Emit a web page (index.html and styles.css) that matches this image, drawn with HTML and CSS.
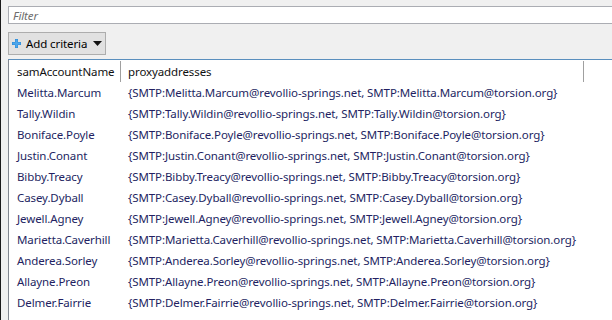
FILE: index.html
```html
<!DOCTYPE html>
<html>
<head>
<meta charset="utf-8">
<link rel="stylesheet" href="styles.css">
</head>
<body>
<div class="window">
  <div class="filter"><span class="placeholder">Filter</span></div>
  <div class="toolbar">
    <button class="criteria">
      <svg class="plus" width="9" height="9" viewBox="0 0 9 9"><path d="M3 0h3v3h3v3H6v3H3V6H0V3h3z" fill="#2a8ad8"/><path d="M3.5 0.5h2v3h3v2h-3v3h-2v-3h-3v-2h3z" fill="#4ea6ea"/></svg>
      <span class="label">Add criteria</span>
      <svg class="caret" width="9" height="5" viewBox="0 0 9 5"><path d="M0 0h9L4.5 5z" fill="#111"/></svg>
    </button>
  </div>
  <div class="grid">
    <div class="row head"><div class="c1">samAccountName</div><div class="c2">proxyaddresses</div></div>
    <div class="row"><div class="c1">Melitta.Marcum</div><div class="c2">{SMTP:Melitta.Marcum@revollio-springs.net, SMTP:Melitta.Marcum@torsion.org}</div></div>
    <div class="row"><div class="c1">Tally.Wildin</div><div class="c2">{SMTP:Tally.Wildin@revollio-springs.net, SMTP:Tally.Wildin@torsion.org}</div></div>
    <div class="row"><div class="c1">Boniface.Poyle</div><div class="c2">{SMTP:Boniface.Poyle@revollio-springs.net, SMTP:Boniface.Poyle@torsion.org}</div></div>
    <div class="row"><div class="c1">Justin.Conant</div><div class="c2">{SMTP:Justin.Conant@revollio-springs.net, SMTP:Justin.Conant@torsion.org}</div></div>
    <div class="row"><div class="c1">Bibby.Treacy</div><div class="c2">{SMTP:Bibby.Treacy@revollio-springs.net, SMTP:Bibby.Treacy@torsion.org}</div></div>
    <div class="row"><div class="c1">Casey.Dyball</div><div class="c2">{SMTP:Casey.Dyball@revollio-springs.net, SMTP:Casey.Dyball@torsion.org}</div></div>
    <div class="row"><div class="c1">Jewell.Agney</div><div class="c2">{SMTP:Jewell.Agney@revollio-springs.net, SMTP:Jewell.Agney@torsion.org}</div></div>
    <div class="row"><div class="c1">Marietta.Caverhill</div><div class="c2">{SMTP:Marietta.Caverhill@revollio-springs.net, SMTP:Marietta.Caverhill@torsion.org}</div></div>
    <div class="row"><div class="c1">Anderea.Sorley</div><div class="c2">{SMTP:Anderea.Sorley@revollio-springs.net, SMTP:Anderea.Sorley@torsion.org}</div></div>
    <div class="row"><div class="c1">Allayne.Preon</div><div class="c2">{SMTP:Allayne.Preon@revollio-springs.net, SMTP:Allayne.Preon@torsion.org}</div></div>
    <div class="row"><div class="c1">Delmer.Fairrie</div><div class="c2">{SMTP:Delmer.Fairrie@revollio-springs.net, SMTP:Delmer.Fairrie@torsion.org}</div></div>
    <div class="row"><div class="c1">Camille.Estus</div><div class="c2">{SMTP:Camille.Estus@revollio-springs.net, SMTP:Camille.Estus@torsion.org}</div></div>
  </div>
</div>
</body>
</html>
```
FILE: styles.css
```css
html, body {
  margin: 0;
  padding: 0;
  width: 612px;
  height: 320px;
  overflow: hidden;
  background: #f0f0f0;
}
body {
  font-family: "Noto Sans", "Open Sans", sans-serif;
  font-size: 11.5px;
  letter-spacing: -0.1px;
}
.window {
  height: 320px;
  overflow: hidden;
  border-left: 1px solid #1a1a1a;
  padding: 6px 0 0 7px;
  box-sizing: border-box;
}
.filter {
  height: 18px;
  background: #fff;
  border: 1px solid #abadb3;
  border-right: none;
  display: flex;
  align-items: center;
  padding-left: 4px;
  box-sizing: border-box;
}
.placeholder {
  font-style: italic;
  color: #6d6d6d;
}
.toolbar {
  padding-top: 8px;
  height: 35px;
  box-sizing: border-box;
}
.criteria {
  display: flex;
  align-items: center;
  height: 23px;
  width: 98px;
  margin: 0;
  padding: 0 0 0 3px;
  background: #e1e1e1;
  border: 1px solid #adadad;
  font: inherit;
  letter-spacing: -0.1px;
  color: #000;
  white-space: nowrap;
  box-sizing: border-box;
}
.plus { margin-right: 5px; flex: none; }
.label { margin-right: 6px; }
.caret { flex: none; }
.grid {
  background: #fff;
  border-top: 1px solid #5a8fbe;
  border-left: 1px solid #828790;
  height: 300px;
}
.row {
  display: flex;
  height: 21px;
  align-items: center;
  color: #231f62;
  white-space: nowrap;
}
.c1 {
  width: 112px;
  padding-left: 8px;
  box-sizing: border-box;
  flex: none;
}
.c2 {
  padding-left: 7px;
}
.head {
  color: #111;
  height: 22px;
}
.head .c1 {
  height: 21px;
  line-height: 21px;
  border-right: 1px solid #a0a0a0;
}
.head .c2 {
  width: 463px;
  height: 21px;
  line-height: 21px;
  border-right: 1px solid #a0a0a0;
  box-sizing: border-box;
  flex: none;
}
```
